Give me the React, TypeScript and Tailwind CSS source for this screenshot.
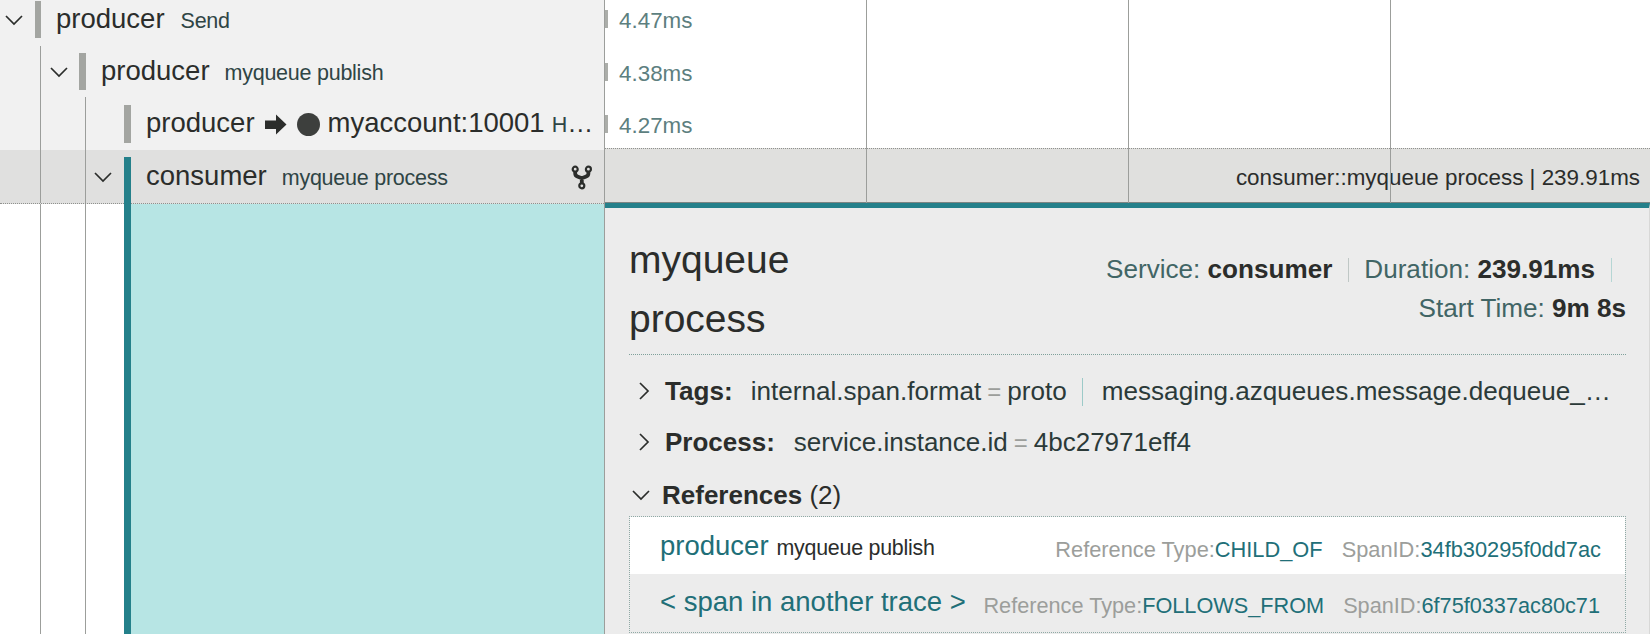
import type { ReactNode } from "react";

const serviceText = "text-[27.5px] leading-none text-[#2b2d2b]";
const operationText = "text-[21.5px] tracking-[-0.25px] leading-none text-[#2f4545]";

function Chevron({ dir = "down", className = "" }: { dir?: "down" | "right"; className?: string }) {
  return (
    <svg className={`shrink-0 ${className}`} width="18" height="18" viewBox="0 0 18 18" fill="none" stroke="#2b2d2b" strokeWidth="1.7">
      <path d={dir === "down" ? "M1 5l8 8 8-8" : "M5 1l8 8-8 8"} />
    </svg>
  );
}

function Fork() {
  return (
    <svg className="shrink-0" width="22" height="25" viewBox="0 0 22 25" fill="none" stroke="#2b2d2b">
      <circle cx="4.200" cy="4.200" r="2.500" strokeWidth="2.200" />
      <circle cx="17.400" cy="4.200" r="2.500" strokeWidth="2.200" />
      <circle cx="10.800" cy="20.800" r="2.500" strokeWidth="2.200" />
      <path d="M4.200 6.800v1.700c0 1.500.8 2.400 2.200 2.900l4.400 1.900 4.400-1.900c1.400-.5 2.200-1.400 2.200-2.900V6.800M10.800 13v5.300" strokeWidth="3.800" />
    </svg>
  );
}

function Guide({ className }: { className: string }) {
  return <div className={`w-px shrink-0 bg-[#9c9e9b] ${className}`} />;
}

function Duration({ value }: { value: string }) {
  return (
    <div className="flex h-[18px] items-center">
      <div className="h-[18px] w-[3px] bg-[#abada9]" />
      <span className="ml-[11px] mt-[5px] text-[22.4px] leading-none text-[#5d7f7f]">{value}</span>
    </div>
  );
}

function Reference({ children, type, id, className }: { children: ReactNode; type: string; id: string; className: string }) {
  return (
    <div className={`flex justify-between pl-[30px] ${className}`}>
      <div className="whitespace-pre leading-none">{children}</div>
      <div className="mt-[7px] flex gap-[19px] leading-none text-[#9c9e9b]">
        <span>Reference Type:<span className="text-[#216f78]">{type}</span></span>
        <span>SpanID:<span className="text-[#216f78]">{id}</span></span>
      </div>
    </div>
  );
}

export default function App() {
  return (
    <div className="flex h-[634px] w-[1650px] overflow-hidden bg-white font-['Liberation_Sans',Arial,sans-serif]">
      <div className="flex h-full w-[605px] shrink-0 flex-col border-r border-[#9c9e9b]">
        <div className="flex h-[45px] shrink-0 bg-[#f1f1f1] pl-[5px]">
          <Chevron className="mt-[11px]" />
          <div className="ml-[12px] mt-px h-[37px] w-[6px] bg-[#a3a5a1]" />
          <span className={`ml-[15px] mt-[5px] ${serviceText}`}>producer</span>
          <span className={`ml-[16px] mt-[11px] ${operationText}`}>Send</span>
        </div>
        <div className="flex h-[52px] shrink-0 bg-[#f1f1f1] pl-[40px]">
          <Guide className="mt-px" />
          <Chevron className="ml-[9px] mt-[18px]" />
          <div className="ml-[11px] mt-[8px] h-[37px] w-[7px] bg-[#a3a5a1]" />
          <span className={`ml-[15px] mt-[12px] ${serviceText}`}>producer</span>
          <span className={`ml-[15px] mt-[18px] ${operationText}`}>myqueue publish</span>
        </div>
        <div className="flex h-[53px] shrink-0 bg-[#f1f1f1] pl-[40px]">
          <Guide className="" />
          <Guide className="ml-[44px]" />
          <div className="ml-[38px] mt-[8px] h-[38px] w-[7px] bg-[#a3a5a1]" />
          <span className={`ml-[15px] mt-[12px] ${serviceText}`}>producer</span>
          <svg className="ml-[10px] mt-[17px] shrink-0" width="22" height="21" viewBox="0 0 22 21" fill="#2b2d2b">
            <path d="M0 6.500h11V.5L21.500 10.500 11 20.500V15H0z" />
          </svg>
          <div className="ml-[10px] mt-[16px] h-[23px] w-[23px] shrink-0 rounded-full bg-[#3d3f3d]" />
          <span className={`ml-[8px] mt-[12px] whitespace-pre ${serviceText}`}>
            myaccount:10001<span className="ml-[7px] text-[21.5px] text-[#2f4545]">H</span><span className="text-[26px]">…</span>
          </span>
        </div>
        <div className="flex h-[54px] shrink-0 border-b border-dotted border-[#8f918e] bg-[#e0e0df] pl-[40px]">
          <Guide className="" />
          <Guide className="ml-[44px]" />
          <Chevron className="ml-[8px] mt-[18px]" />
          <div className="ml-[12px] mt-[7px] h-[47px] w-[7px] bg-[#24808a]" />
          <span className={`ml-[15px] mt-[12px] ${serviceText}`}>consumer</span>
          <span className={`ml-[15px] mt-[18px] ${operationText}`}>myqueue process</span>
          <div className="ml-auto mr-[11px] mt-[15px]"><Fork /></div>
        </div>
        <div className="flex min-h-0 flex-1 pl-[40px]">
          <Guide className="" />
          <Guide className="ml-[44px]" />
          <div className="ml-[38px] w-[7px] bg-[#24808a]" />
          <div className="flex-1 bg-[#b7e5e4]" />
        </div>
      </div>

      <div className="flex min-w-0 flex-1 flex-col">
        <div className="relative h-[203px] shrink-0">
          <div className="flex h-[148px] flex-col gap-[34.5px] pt-[10px]">
            <Duration value="4.47ms" />
            <Duration value="4.38ms" />
            <Duration value="4.27ms" />
          </div>
          <div className="flex h-[55px] items-center justify-end border-y border-b-[#7d8583] border-t-[#8f918e] [border-top-style:dotted] bg-[#e0e0de] pr-[10px] pt-[6px] text-[22.4px] leading-none text-[#2b2d2b]">
            consumer::myqueue process | 239.91ms
          </div>
          <div className="pointer-events-none absolute inset-0 flex">
            <Guide className="ml-[261px]" />
            <Guide className="ml-[261px]" />
            <Guide className="ml-[261px]" />
          </div>
        </div>

        <div className="flex min-h-0 flex-1 flex-col border-r border-r-[#d8d8d7] border-t-[5px] border-t-[#24808a] bg-[#ececec] pl-[24px] pr-[23px]">
          <div className="flex h-[147px] shrink-0 justify-between border-b border-dotted border-[#7fa09a]">
            <h2 className="mt-[22px] w-[200px] text-[39px] leading-[59px] text-[#2b2d2b]">myqueue process</h2>
            <div className="mt-[42px] flex flex-col items-end text-[26.1px] leading-[39px] text-[#416565]">
              <div className="flex items-center">
                <span>Service: <b className="text-[#2b2d2b]">consumer</b></span>
                <span className="ml-[16px] h-[24px] w-px bg-[#bfc7c5]" />
                <span className="ml-[15px]">Duration: <b className="text-[#2b2d2b]">239.91ms</b></span>
                <span className="ml-[16px] mr-[14px] h-[24px] w-px bg-[#b5d6d4]" />
              </div>
              <div>Start Time: <b className="text-[#2b2d2b]">9m 8s</b></div>
            </div>
          </div>

          <div className="mt-[10px] flex h-[52px] shrink-0 items-center whitespace-pre pt-px text-[26.1px] text-[#2b3a39]">
            <Chevron dir="right" className="-mt-[2px] ml-[6px]" />
            <b className="ml-[12px] text-[#2b2d2b]">Tags:</b>
            <span className="ml-[18px]">internal.span.format</span>
            <span className="mx-[6px] text-[24px] text-[#9c9e9b]">=</span>
            <span>proto</span>
            <span className="ml-[15px] h-[28px] w-px bg-[#9ccac8]" />
            <span className="ml-[19px]">messaging.azqueues.message.dequeue_…</span>
          </div>
          <div className="flex h-[51px] shrink-0 items-center whitespace-pre text-[26px] text-[#2b3a39]">
            <Chevron dir="right" className="-mt-[2px] ml-[6px]" />
            <b className="ml-[12px] text-[#2b2d2b]">Process:</b>
            <span className="ml-[19px]">service.instance.id</span>
            <span className="mx-[6px] text-[24px] text-[#9c9e9b]">=</span>
            <span>4bc27971eff4</span>
          </div>
          <div className="flex h-[48px] shrink-0 items-center whitespace-pre pt-[7px] text-[26px] text-[#2b2d2b]">
            <Chevron className="-mt-[2px] ml-[3px]" />
            <span className="ml-[12px]"><b>References</b> (2)</span>
          </div>

          <div className="h-[117px] shrink-0 border border-dotted border-[#8fa9a5]">
            <Reference className="h-[57px] bg-white pr-[24px] pt-[15px] text-[21.8px]" type="CHILD_OF" id="34fb30295f0dd7ac">
              <span className="text-[27.5px] text-[#216f78]">producer</span>
              <span className="ml-[8px] text-[21.4px] tracking-[-0.25px] text-[#2b2d2b]">myqueue publish</span>
            </Reference>
            <Reference className="h-[58px] pr-[25px] pt-[14px] text-[21.7px]" type="FOLLOWS_FROM" id="6f75f0337ac80c71">
              <span className="text-[27.5px] text-[#216f78]">{"< span in another trace >"}</span>
            </Reference>
          </div>
        </div>
      </div>
    </div>
  );
}
